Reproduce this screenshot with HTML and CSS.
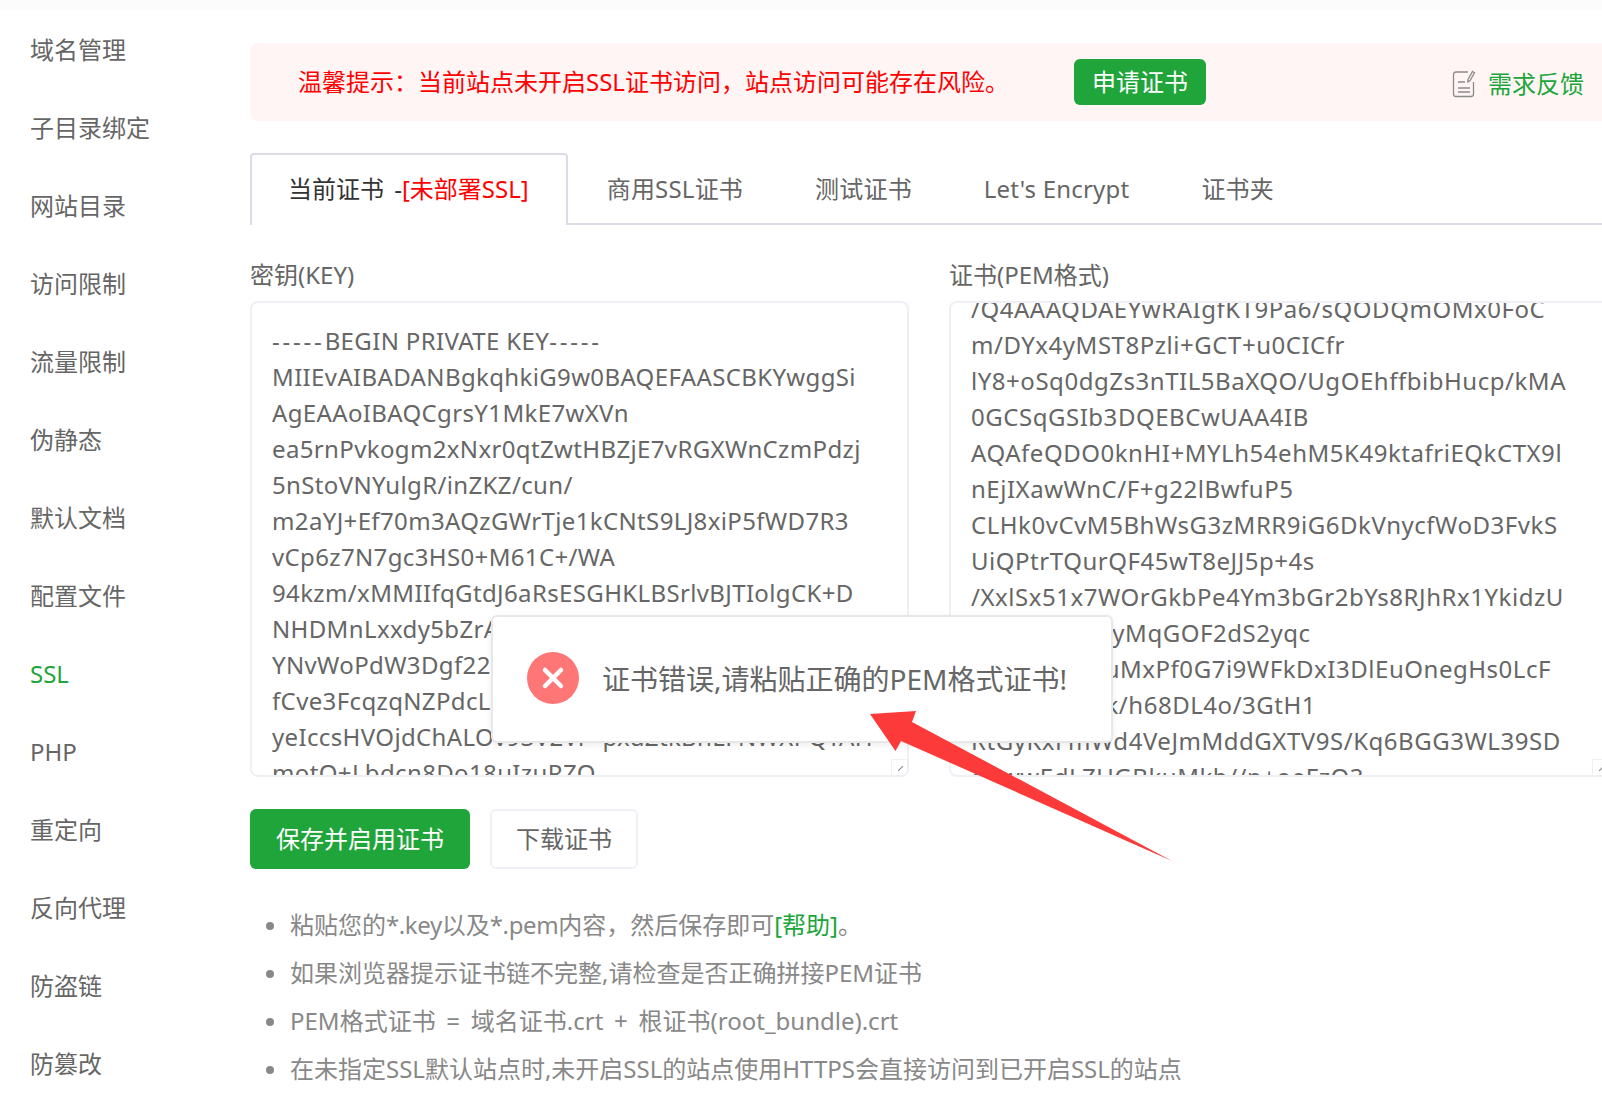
FILE: index.html
```html
<!DOCTYPE html>
<html lang="zh-CN">
<head>
<meta charset="utf-8">
<title>SSL</title>
<link rel="stylesheet" href="styles.css">
</head>
<body>
<div class="page">
  <nav class="side">
    <a>域名管理</a><a>子目录绑定</a><a>网站目录</a><a>访问限制</a><a>流量限制</a><a>伪静态</a><a>默认文档</a><a>配置文件</a><a class="on">SSL</a><a>PHP</a><a>重定向</a><a>反向代理</a><a>防盗链</a><a>防篡改</a>
  </nav>
  <main class="main">
    <div class="alert">
      <span class="alert-text">温馨提示：当前站点未开启SSL证书访问，站点访问可能存在风险。</span>
      <button class="btn-apply">申请证书</button>
      <span class="feedback">
        <svg class="fb-icon" viewBox="0 0 24 28" width="24" height="28" fill="none" stroke="#8a8a8a" stroke-width="1.3"><path d="M16 2H4a2.500 2.500 0 0 0-2.500 2.500V24A2.500 2.500 0 0 0 4 26.500h15a2.500 2.500 0 0 0 2.500-2.500V12"/><path d="M20.500 1.500l2 1.200-4.500 8-2.200 1.200.2-2.500z"/><path d="M6 12h7M6 18h12M6 22h12"/></svg>
        <span>需求反馈</span>
      </span>
    </div>
    <div class="tabs">
      <div class="tab active">当前证书 -<span class="red">[未部署SSL]</span></div>
      <div class="tab">商用SSL证书</div>
      <div class="tab">测试证书</div>
      <div class="tab">Let's Encrypt</div>
      <div class="tab">证书夹</div>
    </div>
    <div class="fields">
      <section class="field">
        <div class="label">密钥(KEY)</div>
        <div class="box">
          <div class="lines"><span class="dash">-----</span>BEGIN PRIVATE KEY<span class="dash">-----</span>
MIIEvAIBADANBgkqhkiG9w0BAQEFAASCBKYwggSi
AgEAAoIBAQCgrsY1MkE7wXVn
ea5rnPvkogm2xNxr0qtZwtHBZjE7vRGXWnCzmPdzj
5nStoVNYulgR/inZKZ/cun/
m2aYJ+Ef70m3AQzGWrTje1kCNtS9LJ8xiP5fWD7R3
vCp6z7N7gc3HS0+M61C+/WA
94kzm/xMMIIfqGtdJ6aRsESGHKLBSrlvBJTIolgCK+D
NHDMnLxxdy5bZrAkQ2
YNvWoPdW3Dgf22xLm8
fCve3FcqzqNZPdcLs4T
yeIccsHVOjdChALOv93V2Vr+pxdZtkBnLFNWXPQTAH
motO+Lbdcn8Do18uIzuRZQ</div>
          <span class="grip"></span>
        </div>
      </section>
      <section class="field field-right">
        <div class="label">证书(PEM格式)</div>
        <div class="box box-right">
          <div class="lines lines-scrolled">/Q4AAAQDAEYwRAIgfKT9Pa6/sQODQmOMx0FoC
m/DYx4yMST8Pzli+GCT+u0CICfr
lY8+oSq0dgZs3nTIL5BaXQO/UgOEhffbibHucp/kMA
0GCSqGSIb3DQEBCwUAA4IB
AQAfeQDO0knHI+MYLh54ehM5K49ktafriEQkCTX9l
nEjIXawWnC/F+g22lBwfuP5
CLHk0vCvM5BhWsG3zMRR9iG6DkVnycfWoD3FvkS
UiQPtrTQurQF45wT8eJJ5p+4s
/XxlSx51x7WOrGkbPe4Ym3bGr2bYs8RJhRx1YkidzU
k9aPxW3sLtyMqGOF2dS2yqc
Zs7vBn2hQuMxPf0G7i9WFkDxI3DlEuOnegHs0LcF
pW4nTy8c2k/h68DL4o/3GtH1
RtGyKxFmWd4VeJmMddGXTV9S/Kq6BGG3WL39SD
oVwwEdLZUGBkuMkb//p+oeFzQ3</div>
          <span class="grip"></span>
        </div>
      </section>
    </div>
    <div class="actions">
      <button class="btn-save">保存并启用证书</button>
      <button class="btn-dl">下载证书</button>
    </div>
    <ul class="tips">
      <li>粘贴您的<span class="tight">*.key</span>以及<span class="tight">*.pem</span>内容，然后保存即可<span class="green">[帮助]</span>。</li>
      <li>如果浏览器提示证书链不完整,请检查是否正确拼接PEM证书</li>
      <li>PEM格式证书 = 域名证书.crt + 根证书(root_bundle).crt</li>
      <li>在未指定SSL默认站点时,未开启SSL的站点使用HTTPS会直接访问到已开启SSL的站点</li>
    </ul>
  </main>
</div>
<div class="toast">
  <svg class="toast-icon" viewBox="0 0 52 52" width="52" height="52"><circle cx="26" cy="26" r="26" fill="#ff7676"/><path d="M18 18l16 16M34 18L18 34" stroke="#fff" stroke-width="4.500" stroke-linecap="round"/></svg>
  <span class="toast-text">证书错误,请粘贴正确的PEM格式证书!</span>
</div>
<svg class="arrow" viewBox="0 0 324 174" width="324" height="174"><path d="M20 24L66 21L62 32L322 171L51 51L45.500 61z" fill="#fc3a3a"/></svg>
</body>
</html>
```
FILE: styles.css
```css
* { box-sizing: border-box; }
html, body { margin: 0; height: 100%; overflow: hidden; background: #fff; }
body {
  font-family: "Noto Sans", "Noto Sans CJK SC", sans-serif;
  font-size: 24px;
  color: #666;
  position: relative;
}
.page { display: flex; height: 1106px; border-top: 10px solid #fcfcfd; }
.side { width: 250px; flex: none; padding: 1px 0 0 30px; display: flex; flex-direction: column; }
.side a { height: 78px; line-height: 78px; flex: none; white-space: nowrap; }
.side .on { color: #20a53a; }
.main { flex: 1; min-width: 0; padding-top: 33px; }
.alert {
  height: 78px; background: #fff5f5; border-radius: 8px 0 0 8px;
  display: flex; align-items: center; padding-left: 48px; white-space: nowrap;
}
.alert-text { color: #f00; width: 776px; flex: none; margin-top: -4px; }
.btn-apply {
  width: 132px; height: 46px; flex: none; border: 0; border-radius: 6px;
  background: #20a53a; color: #fff; font: inherit; padding: 0 0 3px; margin-top: 0;
}
.feedback { display: flex; align-items: center; gap: 12px; margin-left: 246px; color: #20a53a; margin-top: 0; }
.fb-icon { flex: none; margin-top: 4px; }
.tabs { display: flex; height: 72px; margin-top: 32px; border-bottom: 2px solid #dddbe8; }
.tab { line-height: 71px; padding: 0 36px; white-space: nowrap; letter-spacing: .2px; }
.tab.active {
  height: 72px; line-height: 67px; padding: 0 37.500px 0 36px; margin-right: 2.500px; color: #333; background: #fff;
  border: 2px solid #dddbe8; border-bottom: 0; border-radius: 4px 4px 0 0;
  word-spacing: 4px; letter-spacing: 0;
}
.red { color: #f00; }
.fields { display: flex; margin-top: 30px; gap: 40px; }
.field { width: 659px; flex: none; }
.field-right { width: 653px; }
.label { height: 46px; line-height: 40px; white-space: nowrap; }
.box {
  position: relative; height: 476px; overflow: hidden;
  border: 2px solid #eef0f6; border-radius: 8px; padding: 20px 0 0 20px;
}
.box-right { border-right: 0; border-radius: 8px 0 0 8px; }
.lines { white-space: pre; line-height: 36px; letter-spacing: .36px; }
.lines-scrolled { margin-top: -32px; letter-spacing: .53px; }
.dash { letter-spacing: 2.800px; }
.grip {
  position: absolute; right: 0; bottom: 0; width: 16px; height: 16px;
  background: #fff; border: 1px solid #eef0f6; border-width: 1px 0 0 1px;
}
.box-right .grip { right: -6px; }
.grip::after {
  content: ""; position: absolute; left: 5px; top: 8px; width: 7px; height: 1px;
  background: #888; transform: rotate(-45deg);
}
.actions { display: flex; gap: 20px; margin-top: 32px; }
.btn-save {
  width: 220px; height: 60px; border: 0; border-radius: 6px;
  background: #20a53a; color: #fff; font: inherit; padding: 0 0 4px;
}
.btn-dl {
  width: 148px; height: 60px; border: 2px solid #eef0f6; border-radius: 6px;
  background: #fff; color: #666; font: inherit; padding: 0 0 4px;
}
.tips { list-style: none; margin: 32px 0 0; padding: 0 0 0 40px; color: #888; word-spacing: 4.500px; }
.tips li { height: 48px; line-height: 48px; position: relative; white-space: nowrap; }
.tips li::before {
  content: ""; position: absolute; left: -24px; top: 21px;
  width: 8px; height: 8px; border-radius: 50%; background: #888;
}
.tight { letter-spacing: -.4px; }
.green { color: #20a53a; }
.toast {
  position: absolute; left: 491px; top: 615px; width: 622px; height: 128px;
  background: #fff; border: 2px solid #e8e8e8; border-radius: 6px;
  display: flex; align-items: center; padding-left: 34px; gap: 23px;
  box-shadow: 0 2px 6px rgba(0,0,0,.08); white-space: nowrap;
}
.toast-icon { flex: none; margin-top: -2px; }
.toast-text { color: #666; font-size: 28px; margin-top: -3px; }
.arrow { position: absolute; left: 850px; top: 690px; }
```
